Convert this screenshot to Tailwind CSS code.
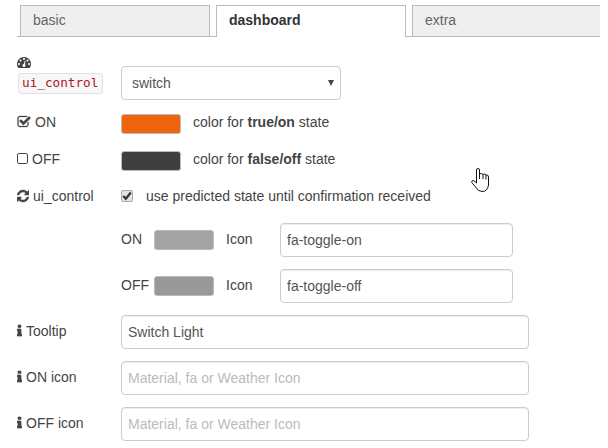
<!DOCTYPE html>
<html lang="en">
<head>
<meta charset="utf-8">
<title>ui_control</title>
<script src="https://cdn.jsdelivr.net/npm/@tailwindcss/browser@4"></script>
</head>
<body class="relative h-[448px] w-[608px] overflow-hidden bg-white font-['Liberation_Sans',Arial,sans-serif] text-sm leading-5 text-[#444]">

<svg class="hidden">
  <symbol id="gauge" viewBox="0 0 1792 1792"><path d="M384 1152q0-53-37.5-90.5t-90.5-37.5-90.5 37.5-37.5 90.5 37.5 90.5 90.5 37.5 90.5-37.5 37.5-90.5zm192-448q0-53-37.5-90.5t-90.5-37.5-90.5 37.5-37.5 90.5 37.5 90.5 90.5 37.5 90.5-37.5 37.5-90.5zm428 481l101-382q6-26-7.5-48.5t-38.5-29.5-48 6.5-30 39.5l-101 382q-60 5-107 43.5t-63 98.5q-20 77 20 146t117 89 146-20 89-117q16-60-6-117t-72-91zm660-33q0-53-37.5-90.5t-90.5-37.5-90.5 37.5-37.5 90.5 37.5 90.5 90.5 37.5 90.5-37.5 37.5-90.5zm-640-640q0-53-37.5-90.5t-90.5-37.5-90.5 37.5-37.5 90.5 37.5 90.5 90.5 37.5 90.5-37.5 37.5-90.5zm448 192q0-53-37.5-90.5t-90.5-37.5-90.5 37.5-37.5 90.5 37.5 90.5 90.5 37.5 90.5-37.5 37.5-90.5zm320 448q0 261-141 483-19 29-54 29h-1402q-35 0-54-29-141-221-141-483 0-182 71-348t191-286 286-191 348-71 348 71 286 191 191 286 71 348z"/></symbol>
  <symbol id="check-square" viewBox="0 0 1792 1792"><path d="M1472 930v318q0 119-84.5 203.5t-203.5 84.5h-832q-119 0-203.5-84.5t-84.5-203.5v-832q0-119 84.5-203.5t203.5-84.5h832q63 0 117 25 15 7 18 23 3 17-9 29l-49 49q-10 10-23 10-3 0-9-2-23-6-45-6h-832q-66 0-113 47t-47 113v832q0 66 47 113t113 47h832q66 0 113-47t47-113v-254q0-13 9-22l64-64q10-10 23-10 6 0 12 3 20 8 20 29zm231-489l-814 814q-24 24-57 24t-57-24l-430-430q-24-24-24-57t24-57l110-110q24-24 57-24t57 24l263 263 647-647q24-24 57-24t57 24l110 110q24 24 24 57t-24 57z"/></symbol>
  <symbol id="square" viewBox="192 0 1408 1792"><path d="M1312 256h-832q-66 0-113 47t-47 113v832q0 66 47 113t113 47h832q66 0 113-47t47-113v-832q0-66-47-113t-113-47zm288 160v832q0 119-84.5 203.5t-203.5 84.5h-832q-119 0-203.5-84.5t-84.5-203.5v-832q0-119 84.5-203.5t203.5-84.5h832q119 0 203.5 84.5t84.5 203.5z"/></symbol>
  <symbol id="refresh" viewBox="128 0 1536 1792"><path d="M1639 1056q0 5-1 7-64 268-268 434.5t-478 166.5q-146 0-282.5-55t-243.5-157l-129 129q-19 19-45 19t-45-19-19-45v-448q0-26 19-45t45-19h448q26 0 45 19t19 45-19 45l-137 137q71 66 161 102t187 36q134 0 250-65t186-179q11-17 53-117 8-23 30-23h192q13 0 22.5 9.5t9.5 22.5zm25-800v448q0 26-19 45t-45 19h-448q-26 0-45-19t-19-45 19-45l138-138q-148-137-349-137-134 0-250 65t-186 179q-11 17-53 117-8 23-30 23h-199q-13 0-22.5-9.5t-9.5-22.5v-7q65-268 270-434.5t480-166.5q146 0 284 55.5t245 156.5l130-129q19-19 45-19t45 19 19 45z"/></symbol>
  <symbol id="info" viewBox="576 0 640 1792"><path d="M1216 1344v128q0 26-19 45t-45 19h-512q-26 0-45-19t-19-45v-128q0-26 19-45t45-19h64v-384h-64q-26 0-45-19t-19-45v-128q0-26 19-45t45-19h384q26 0 45 19t19 45v576h64q26 0 45 19t19 45zm-128-1152v192q0 26-19 45t-45 19h-256q-26 0-45-19t-19-45v-192q0-26 19-45t45-19h256q26 0 45 19t19 45z"/></symbol>
</svg>

<nav class="mt-[5px] ml-[17px] flex h-8 w-[583px] text-[#666]">
  <div class="w-[3px] border-b border-[#bbb]"></div>
  <div class="w-[190px] border border-[#bbb] bg-[#efefef] pt-1 pl-3">basic</div>
  <div class="w-[6px] border-b border-[#bbb]"></div>
  <div class="w-[190px] border border-b-0 border-[#bbb] pt-1 pl-3 font-bold text-[#333]">dashboard</div>
  <div class="w-[6px] border-b border-[#bbb]"></div>
  <div class="flex-1 border border-r-0 border-[#bbb] bg-[#efefef] pt-1 pl-3">extra</div>
</nav>

<main class="pt-[18px] pl-[17px]">
  <div class="flex h-[45px]">
    <div class="w-[104px]">
      <svg class="h-[14px] w-[14px] fill-[#444]"><use href="#gauge"/></svg>
      <code class="mt-1 ml-px block h-[21px] w-[85px] rounded-[3px] border border-[#e1e1e8] bg-[#f7f7f9] pl-[3px] font-['DejaVu_Sans_Mono',monospace] text-[12.7px] leading-[18px] text-[#ad1625]">ui_control</code>
    </div>
    <div class="mt-[11px] flex h-[34px] w-[220px] items-center justify-between rounded-[4px] border border-[#ccc] pr-[6px] pl-[10px] text-[#555]">switch
      <svg class="h-[6px] w-[6px] fill-[#444]" viewBox="0 0 6 6"><path d="M0 0h6L3 6z"/></svg>
    </div>
  </div>

  <div class="mt-[12px] flex h-5 items-center">
    <div class="flex w-[104px] items-center gap-1"><svg class="h-[14px] w-[14px] fill-[#444] stroke-[#444] stroke-[40]"><use href="#check-square"/></svg>ON</div>
    <div class="mt-[3px] h-5 w-[60px] rounded-[3px] border border-[#bbb] bg-[#f0640d]"></div>
    <div class="ml-3">color for <b>true/on</b> state</div>
  </div>

  <div class="mt-[17px] flex h-5 items-center">
    <div class="flex w-[104px] items-center gap-1"><svg class="h-[14px] w-[11px] fill-[#444]"><use href="#square"/></svg>OFF</div>
    <div class="mt-[3px] h-5 w-[60px] rounded-[3px] border border-[#bbb] bg-[#3f3f3f]"></div>
    <div class="ml-3">color for <b>false/off</b> state</div>
  </div>

  <div class="mt-[17px] flex h-5 items-center">
    <div class="flex w-[104px] items-center gap-1"><svg class="h-[14px] w-[12px] fill-[#444] stroke-[#444] stroke-[60]"><use href="#refresh"/></svg>ui_control</div>
    <div class="flex size-3 items-center justify-center rounded-[2px] border border-[#aaa] bg-[#e4e4e4]"><svg class="size-[10px] shrink-0 fill-none stroke-[#333] stroke-[2.2]" viewBox="0 0 10 10"><path d="M1.200 5L3.800 7.800L8.800 1.500"/></svg></div>
    <div class="ml-[13px]">use predicted state until confirmation received</div>
  </div>

  <div class="mt-[17px] ml-[104px] flex h-[34px]">
    <div class="mt-[6px] w-[33px]">ON</div>
    <div class="mt-[7px] h-5 w-[60px] rounded-[3px] border border-[#bbb] bg-[#a3a3a3]"></div>
    <div class="mt-[6px] ml-3 w-[54px]">Icon</div>
    <div class="flex w-[233px] items-center rounded-[4px] border border-[#ccc] pl-[6px] text-[#555] shadow-[inset_0_1px_1px_rgba(0,0,0,0.075)]">fa-toggle-on</div>
  </div>
  <div class="mt-[12px] ml-[104px] flex h-[34px]">
    <div class="mt-[6px] w-[33px]">OFF</div>
    <div class="mt-[7px] h-5 w-[60px] rounded-[3px] border border-[#bbb] bg-[#999]"></div>
    <div class="mt-[6px] ml-3 w-[54px]">Icon</div>
    <div class="flex w-[233px] items-center rounded-[4px] border border-[#ccc] pl-[6px] text-[#555] shadow-[inset_0_1px_1px_rgba(0,0,0,0.075)]">fa-toggle-off</div>
  </div>

  <div class="mt-[12px] flex h-[34px]">
    <div class="mt-[6px] flex h-5 w-[104px] items-center gap-1"><svg class="h-[14px] w-[5px] overflow-visible fill-[#444] stroke-[#444] stroke-[90]"><use href="#info"/></svg>Tooltip</div>
    <div class="flex w-[408px] items-center rounded-[4px] border border-[#ccc] pl-[6px] text-[#555] shadow-[inset_0_1px_1px_rgba(0,0,0,0.075)]">Switch Light</div>
  </div>
  <div class="mt-[12px] flex h-[34px]">
    <div class="mt-[6px] flex h-5 w-[104px] items-center gap-1"><svg class="h-[14px] w-[5px] overflow-visible fill-[#444] stroke-[#444] stroke-[90]"><use href="#info"/></svg>ON icon</div>
    <div class="flex w-[408px] items-center rounded-[4px] border border-[#ccc] pl-[6px] text-[#bbb] shadow-[inset_0_1px_1px_rgba(0,0,0,0.075)]">Material, fa or Weather Icon</div>
  </div>
  <div class="mt-[12px] flex h-[34px]">
    <div class="mt-[6px] flex h-5 w-[104px] items-center gap-1"><svg class="h-[14px] w-[5px] overflow-visible fill-[#444] stroke-[#444] stroke-[90]"><use href="#info"/></svg>OFF icon</div>
    <div class="flex w-[408px] items-center rounded-[4px] border border-[#ccc] pl-[6px] text-[#bbb] shadow-[inset_0_1px_1px_rgba(0,0,0,0.075)]">Material, fa or Weather Icon</div>
  </div>
</main>

<!-- mouse pointer -->
<svg class="absolute top-[168px] left-[471px] h-6 w-[19px] fill-white stroke-[#112] [stroke-linejoin:round]" viewBox="0 0 19 24"><path d="M5.500 15V2Q5.500 .5 7 .5T8.500 2V6Q10.500 4.500 12 6.500Q14 5 15 7Q17.500 6.500 17.500 9V17Q16.500 23.500 11 23.500Q7 23.500 4.500 19L.8 14.500Q.5 12 2.500 12.500Q4 13.500 5.500 15ZM8.500 6V11M12 6.500V11M15 7V11.500"/></svg>
</body>
</html>
